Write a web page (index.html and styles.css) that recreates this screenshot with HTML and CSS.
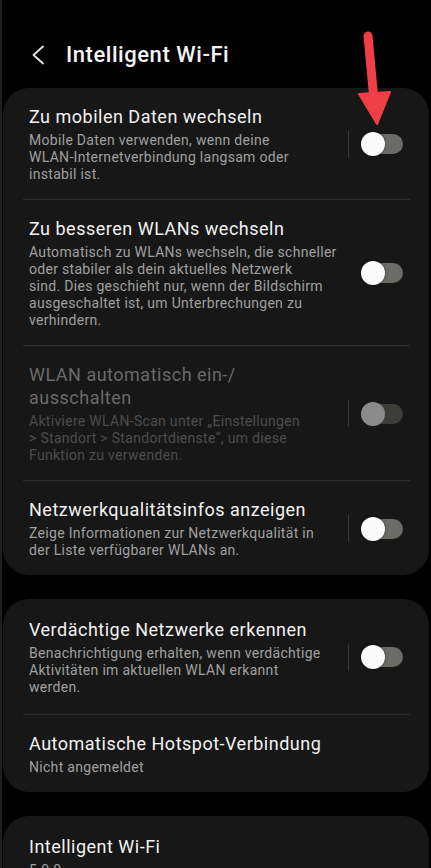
FILE: index.html
```html
<!DOCTYPE html>
<html lang="de">
<head>
<meta charset="UTF-8">
<title>Intelligent Wi-Fi</title>
<meta name="viewport" content="width=device-width, initial-scale=1.0">
<link rel="stylesheet" href="styles.css">
</head>
<body>
<div class="screen">
    <header class="topbar">
        <svg class="back" width="14" height="20" viewBox="0 0 14 20"><path d="M12 1.5 L2.5 10 L12 18.5" fill="none" stroke="#e6e6e6" stroke-width="1.8" stroke-linecap="round" stroke-linejoin="round"/></svg>
        <h1>Intelligent Wi-Fi</h1>
    </header>

    <section class="card">
        <div class="row">
            <div class="txt">
                <div class="title">Zu mobilen Daten wechseln</div>
                <div class="desc">Mobile Daten verwenden, wenn deine<br>WLAN-Internetverbindung langsam oder<br>instabil ist.</div>
            </div>
            <span class="sep"></span>
            <span class="switch"></span>
        </div>
        <div class="row">
            <div class="txt">
                <div class="title">Zu besseren WLANs wechseln</div>
                <div class="desc">Automatisch zu WLANs wechseln, die schneller<br>oder stabiler als dein aktuelles Netzwerk<br>sind. Dies geschieht nur, wenn der Bildschirm<br>ausgeschaltet ist, um Unterbrechungen zu<br>verhindern.</div>
            </div>
            <span class="sep hidden"></span>
            <span class="switch"></span>
        </div>
        <div class="row disabled">
            <div class="txt">
                <div class="title">WLAN automatisch ein-/<br>ausschalten</div>
                <div class="desc">Aktiviere WLAN-Scan unter „Einstellungen<br>&gt; Standort &gt; Standortdienste“, um diese<br>Funktion zu verwenden.</div>
            </div>
            <span class="sep"></span>
            <span class="switch"></span>
        </div>
        <div class="row">
            <div class="txt">
                <div class="title">Netzwerkqualitätsinfos anzeigen</div>
                <div class="desc">Zeige Informationen zur Netzwerkqualität in<br>der Liste verfügbarer WLANs an.</div>
            </div>
            <span class="sep"></span>
            <span class="switch"></span>
        </div>
    </section>

    <section class="card">
        <div class="row roomy">
            <div class="txt">
                <div class="title">Verdächtige Netzwerke erkennen</div>
                <div class="desc">Benachrichtigung erhalten, wenn verdächtige<br>Aktivitäten im aktuellen WLAN erkannt<br>werden.</div>
            </div>
            <span class="sep"></span>
            <span class="switch"></span>
        </div>
        <div class="row">
            <div class="txt">
                <div class="title">Automatische Hotspot-Verbindung</div>
                <div class="desc">Nicht angemeldet</div>
            </div>
        </div>
    </section>

    <section class="card">
        <div class="row roomy">
            <div class="txt">
                <div class="title">Intelligent Wi-Fi</div>
                <div class="desc">5.0.0</div>
            </div>
        </div>
    </section>

    <!-- annotation arrow from the screenshot -->
    <svg class="arrow" width="45" height="100" viewBox="0 0 45 100">
        <path d="M16 7 L21.5 66" stroke="#ef3e46" stroke-width="9" stroke-linecap="round" fill="none"/>
        <polygon points="7,65 38,63 25,95" fill="#ef3e46" stroke="#ef3e46" stroke-width="2" stroke-linejoin="round"/>
    </svg>
</div>
</body>
</html>
```

FILE: styles.css
```css
html,body{margin:0;padding:0;background:#000}
body{font-family:Roboto,"Noto Sans","Liberation Sans",sans-serif;color:#f2f2f2;overflow:hidden}
.screen{position:relative;border-left:2px solid #1c2027;padding:0 2px 0 1px;min-height:868px}

.topbar{display:flex;align-items:center;height:88px;box-sizing:border-box;padding:20px 0 0 28px}
.back{margin-top:1px}
.topbar h1{margin:0 0 0 21px;font-size:22px;font-weight:500;letter-spacing:.55px;color:#f4f4f4}

.card{background:#171717;border-radius:26px;padding:0 19px 0 20px;margin-bottom:24px}
.row{display:flex;align-items:center;padding:17px 0 16px;border-bottom:1px solid #2d2d2d}
.row:last-child{border-bottom:none}
.row.roomy{padding:19px 0 18px}
.txt{flex:1;padding-left:6px;white-space:nowrap}
.title{font-size:18px;line-height:23px;letter-spacing:.5px}
.desc{font-size:14px;line-height:17px;color:#a0a0a0;margin-top:4px;letter-spacing:.3px}

.sep{width:1px;height:27px;background:#363636;margin:0 12px 0 0}
.sep.hidden{background:none}
.switch{position:relative;width:42px;height:20px;border-radius:10px;background:#6c6c67;margin-right:7px}
.switch::before{content:"";position:absolute;left:0;top:-2px;width:24px;height:24px;border-radius:50%;background:#fafafa;box-shadow:0 0 3px rgba(0,0,0,.5)}

.disabled .title{color:#6a6a6a}
.disabled .desc{color:#4d4d4d}
.disabled .switch{background:#3c3d39}
.disabled .switch::before{background:#8b8b8b;box-shadow:none}

.arrow{position:absolute;left:350px;top:29px}
```
